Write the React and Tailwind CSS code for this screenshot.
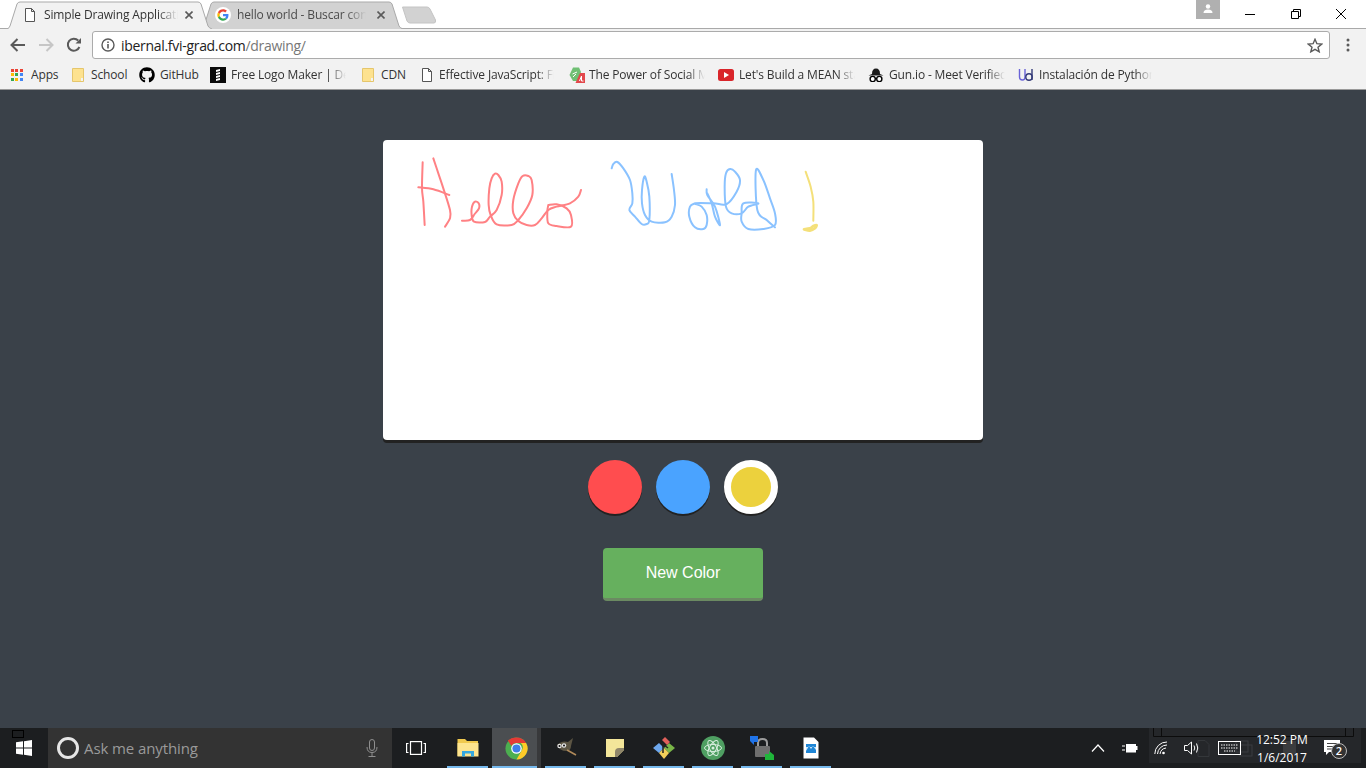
import { FaGithub } from 'react-icons/fa';

const UI_FONT = "font-['Open_Sans','Noto_Sans',sans-serif]";

const BOOKMARKS = [
  { label: 'Apps', icon: <AppsIcon />, width: 'w-[61px]', text: 'w-[30px] ml-[6px]' },
  { label: 'School', icon: <FolderIcon />, width: 'w-[69px]', text: 'w-[40px] ml-[5px]' },
  { label: 'GitHub', icon: <FaGithub className="w-4 h-4 text-black" />, width: 'w-[71px]', text: 'w-[42px] ml-[5px]' },
  { label: 'Free Logo Maker | Design', icon: <LogoMakerIcon />, width: 'w-[150px]', text: 'w-[115px] ml-[5px]', fade: true },
  { label: 'CDN', icon: <FolderIcon />, width: 'w-[59px]', text: 'w-[30px] ml-[5px]' },
  { label: 'Effective JavaScript: Free', icon: <PageIcon />, width: 'w-[150px]', text: 'w-[115px] ml-[4px]', fade: true },
  { label: 'The Power of Social Media', icon: <PowerIcon />, width: 'w-[149px]', text: 'w-[116px] ml-[4px]', fade: true },
  { label: "Let's Build a MEAN stack", icon: <YoutubeIcon />, width: 'w-[150px]', text: 'w-[116px] ml-[5px]', fade: true },
  { label: 'Gun.io - Meet Verified', icon: <GunIcon />, width: 'w-[150px]', text: 'w-[116px] ml-[5px]', fade: true },
  { label: 'Instalación de Python', icon: <UdacityIcon />, width: 'w-[134px]', text: 'w-[114px] ml-[5px]', fade: true },
];

// catmull-rom through the sampled points, so the hand drawn strokes stay round
function smooth(points) {
  const p = points.trim().split(/\s+/).map((s) => s.split(',').map(Number));
  let d = `M${p[0][0]} ${p[0][1]}`;
  for (let i = 0; i < p.length - 1; i++) {
    const a = p[i - 1] || p[i];
    const b = p[i];
    const c = p[i + 1];
    const e = p[i + 2] || c;
    d += ` C${b[0] + (c[0] - a[0]) / 6} ${b[1] + (c[1] - a[1]) / 6} ${c[0] - (e[0] - b[0]) / 6} ${c[1] - (e[1] - b[1]) / 6} ${c[0]} ${c[1]}`;
  }
  return d;
}

export default function App() {
  return (
    <div className={`w-[1366px] h-[768px] overflow-hidden flex flex-col bg-[#3a4149] ${UI_FONT}`}>
      <TabStrip />
      <Toolbar />
      <BookmarksBar />
      <main className="flex-1 flex flex-col items-center font-['Liberation_Sans',sans-serif]">
        {/* Drawing canvas */}
        <div className="mt-[50px] w-[600px] h-[300px] bg-white rounded shadow-[0_3px_0_#222222]">
          <Scribbles />
        </div>

        {/* Palette */}
        <div className="mt-5 flex gap-3.5">
          <div className="w-[54px] h-[54px] rounded-full bg-[#ff4d4f] shadow-[0_2px_0_#222222]" />
          <div className="w-[54px] h-[54px] rounded-full bg-[#4aa3ff] shadow-[0_2px_0_#222222]" />
          <div className="w-[54px] h-[54px] rounded-full bg-[#ecd13d] border-[7px] border-white shadow-[0_2px_0_#222222]" />
        </div>

        <button className="mt-[34px] w-40 h-[53px] rounded bg-[#66b05e] border-b-[3px] border-[#6b8a62] text-white text-base">
          New Color
        </button>
      </main>
      <Taskbar />
    </div>
  );
}

function TabStrip() {
  return (
    <div className="relative h-[29px] shrink-0 bg-white border-b border-[#a9a9a9] flex items-end">
      <Tab className="ml-[6px] w-[206px] pl-[16px] z-10" width={206} fill="#f2f2f2" icon={<PageIcon />} title="Simple Drawing Application" titleClass="w-[134px] ml-[6px] text-[#333333]" closeClass="ml-[7px]" />
      <Tab className="-ml-[12px] w-[203px] pl-[15px]" width={203} fill="#d2d2d2" icon={<GoogleIcon />} title="hello world - Buscar con Google" titleClass="w-[129px] ml-[6px] text-[#4b4b4b]" closeClass="ml-[11px]" />
      <svg width="36" height="18" viewBox="0 0 36 18" className="mb-[4px] -ml-[2px]">
        <path d="M1.5 1 H26 Q28 1 29 3 L34.5 14 Q35 17 33 17 H9 Q7 17 6 15 Z" fill="#d2d2d2" stroke="#c4c4c4" />
      </svg>
      <div className="ml-auto h-full self-start flex items-start pr-[2px]">
        <div className="w-6 h-[19px] bg-[#b0b0b0] flex justify-center pt-1 mr-[8px]">
          <svg width="10" height="10" viewBox="0 0 10 10">
            <circle cx="5" cy="2.5" r="2.2" fill="white" />
            <path d="M0.5 9 Q0.5 5.5 5 5.5 Q9.5 5.5 9.5 9 Z" fill="white" />
          </svg>
        </div>
        <WindowButton>
          <path d="M0 5.5 H10" stroke="black" />
        </WindowButton>
        <WindowButton>
          <path d="M0.5 2.5 H7.5 V9.5 H0.5 Z M2.5 2.5 V0.5 H9.5 V7.5 H7.5" stroke="black" fill="none" />
        </WindowButton>
        <WindowButton>
          <path d="M0 0 L10 10 M10 0 L0 10" stroke="black" />
        </WindowButton>
      </div>
    </div>
  );
}

function WindowButton({ children }) {
  return (
    <div className="w-[45.5px] h-[28px] flex items-center justify-center">
      <svg width="10" height="10" viewBox="0 0 10 10">{children}</svg>
    </div>
  );
}

function Tab({ className, width, fill, icon, title, titleClass, closeClass }) {
  return (
    <div className={`relative h-[28px] -mb-px flex items-center ${className}`}>
      <svg className="absolute inset-0" width={width} height="28" viewBox={`0 0 ${width} 28`}>
        <path d={`M0 28 Q3 28 4 25 L11 3 Q12 1 14 1 H${width - 14} Q${width - 12} 1 ${width - 11} 3 L${width - 4} 25 Q${width - 3} 27 ${width} 28`} fill={fill} stroke="#a9a9a9" />
      </svg>
      <span className="relative w-4 h-4 flex items-center justify-center">{icon}</span>
      <span className={`relative text-xs tracking-[-0.15px] whitespace-nowrap overflow-hidden ${titleClass} [mask-image:linear-gradient(to_right,black_85%,transparent)]`}>
        {title}
      </span>
      <svg className={`relative ${closeClass}`} width="8" height="8" viewBox="0 0 8 8">
        <path d="M0.5 0.5 L7.5 7.5 M7.5 0.5 L0.5 7.5" stroke="#5a5a5a" strokeWidth="1.6" />
      </svg>
    </div>
  );
}

function Toolbar() {
  return (
    <div className="h-[32px] shrink-0 bg-[#f2f2f2] flex items-center">
      <svg className="ml-[10px]" width="16" height="14" viewBox="0 0 16 14" fill="none" stroke="#5a5a5a" strokeWidth="2">
        <path d="M15 7 H2 M7.5 1 L1.5 7 L7.5 13" />
      </svg>
      <svg className="ml-[12px]" width="16" height="14" viewBox="0 0 16 14" fill="none" stroke="#c6c6c6" strokeWidth="2">
        <path d="M1 7 H14 M8.5 1 L14.5 7 L8.5 13" />
      </svg>
      <svg className="ml-[12px]" width="16" height="16" viewBox="0 0 16 16" fill="none">
        <path d="M13.4 10 A6 6 0 1 1 12.2 3.5" stroke="#5a5a5a" strokeWidth="2" />
        <path d="M9.5 6.5 H15 V1 Z" fill="#5a5a5a" />
      </svg>
      <div className="ml-[10px] w-[1238px] h-[28px] bg-white border border-[#ababab] rounded-[3px] flex items-center">
        <svg className="ml-[8px]" width="14" height="14" viewBox="0 0 14 14" fill="none">
          <circle cx="7" cy="7" r="6" stroke="#5a5a5a" strokeWidth="1.4" />
          <path d="M7 6 V10.5 M7 3.5 V5" stroke="#5a5a5a" strokeWidth="1.6" />
        </svg>
        <span className="ml-[6px] text-[14px] tracking-[-0.3px] text-[#222222]">
          ibernal.fvi-grad.com<span className="text-[#777777]">/drawing/</span>
        </span>
        <svg className="ml-auto mr-[6px]" width="16" height="15" viewBox="0 0 16 15" fill="none">
          <path d="M8 1.3 L9.9 5.7 L14.7 6.1 L11 9.2 L12.2 13.8 L8 11.4 L3.8 13.8 L5 9.2 L1.3 6.1 L6.1 5.7 Z" stroke="#5a5a5a" strokeWidth="1.4" />
        </svg>
      </div>
      <svg className="ml-[16px]" width="4" height="14" viewBox="0 0 4 14" fill="#5a5a5a">
        <circle cx="2" cy="2" r="1.5" />
        <circle cx="2" cy="7" r="1.5" />
        <circle cx="2" cy="12" r="1.5" />
      </svg>
    </div>
  );
}

function BookmarksBar() {
  return (
    <div className="h-[29px] shrink-0 bg-[#f2f2f2] border-b border-[#9a9a9a] flex items-center pl-[9px]">
      {BOOKMARKS.map((b) => (
        <div key={b.label} className={`${b.width} flex items-center`}>
          <span className="w-4 h-4 flex items-center justify-center shrink-0">{b.icon}</span>
          <span className={`${b.text} text-xs tracking-[-0.15px] text-[#333333] whitespace-nowrap overflow-hidden ${b.fade ? '[mask-image:linear-gradient(to_right,black_85%,transparent)]' : ''}`}>
            {b.label}
          </span>
        </div>
      ))}
    </div>
  );
}

function Scribbles() {
  const stroke = { fill: 'none', strokeWidth: 6, strokeLinejoin: 'round', strokeLinecap: 'round' };
  return (
    <svg width="600" height="300" viewBox="383 140 600 300">
      <g transform="translate(400 145) scale(0.3333)" stroke="#ff8184" {...stroke}>
        <path d={smooth('68,52 66,130 70,170 74,240')} />
        <path d={smooth('100,40 115,85 130,130 150,195 150,220 135,245')} />
        <path d={smooth('55,127 100,133 148,150')} />
        <path d={smooth('186,227 210,225 224,207 237,190 236,175 225,170 216,185 215,210 222,230 255,231 270,215 290,195 305,150 305,110 295,90 285,86 275,100 268,130 266,180 272,210 290,238 335,240 355,225 380,190 397,150 395,105 385,93 368,93 355,115 340,165 340,205 355,228 380,240 405,240 425,220 445,195 470,185 510,175 535,155 543,135')} />
        <path d={smooth('445,180 470,178 500,190 513,210 513,245 470,243 445,235 442,200 445,180')} />
      </g>
      <g transform="translate(600 150) scale(0.3333)" stroke="#8ac2ff" {...stroke}>
        <path d={smooth('35,55 40,42 52,36 70,55 90,90 97,130 97,160 88,180 105,200 125,222 140,222 148,210 148,140 140,95 133,80 126,120 126,160 135,195 155,215 195,217 215,200 225,165 222,120 215,72')} />
        <path d={smooth('285,160 270,170 268,200 285,232 310,237 320,225 320,195 305,170 285,160 340,160 380,162 410,125 420,90 405,65 390,57 378,70 374,110 378,170 395,190 425,190 445,170 475,160 430,160 425,190 425,215 445,237 490,237 525,225 525,190 510,145 490,90 468,60 472,180 500,210 525,232')} />
        <path d={smooth('320,118 322,135 345,170 360,225 345,200 335,160 322,130')} />
      </g>
      <g transform="translate(600 150) scale(0.3333)" stroke="#f4e07a" {...stroke}>
        <path d={smooth('617,65 632,110 640,155 640,212')} />
        <path d={smooth('612,238 630,242 645,235 650,225 640,228 630,235 612,238')} strokeWidth="8" />
      </g>
    </svg>
  );
}

function Taskbar() {
  const apps = [
    { icon: <ExplorerIcon />, key: 'explorer' },
    { icon: <ChromeIcon />, key: 'chrome', active: true },
    { icon: <GimpIcon />, key: 'gimp' },
    { icon: <NotesIcon />, key: 'notes' },
    { icon: <GitIcon />, key: 'git' },
    { icon: <AtomIcon />, key: 'atom' },
    { icon: <LockIcon />, key: 'lock' },
    { icon: <PhotoIcon />, key: 'photo' },
  ];
  return (
    <div className="relative h-10 shrink-0 bg-[#1c1e20] flex items-stretch text-white">
      {/* window thumbnail showing through the taskbar */}
      <div className="absolute left-[1149px] top-0 w-[212px] h-[35px] bg-[#25272a]" />
      <svg className="absolute left-[1149px] top-0" width="212" height="35" viewBox="0 0 212 35" fill="none">
        <path d="M4.5 0 V8.5 H204.5 V0 M12.5 0 V8.5 M196.5 0 V8.5" stroke="#0c0c0c" />
        <path d="M49 12.5 H56 L60 16.5 V28.5 H49 Z" stroke="#34373a" />
        <rect x="87" y="13" width="12" height="11" stroke="#3a3d40" />
        <rect x="91" y="17" width="12" height="11" stroke="#3a3d40" />
        <rect x="134" y="13" width="13" height="13" fill="#3a3c3e" />
      </svg>
      <div className="absolute left-3 top-0.5 w-3 h-2 border border-black" />

      <div className="w-12 flex items-center justify-center">
        <svg width="16" height="16" viewBox="0 0 16 16" fill="white">
          <path d="M0 2.3 L7 1.3 V7.5 H0 Z M8 1.2 L16 0 V7.5 H8 Z M0 8.5 H7 V14.7 L0 13.7 Z M8 8.5 H16 V16 L8 14.8 Z" />
        </svg>
      </div>
      <div className="w-[344px] bg-[#333333] flex items-center pl-[9px]">
        <div className="w-[22px] h-[22px] rounded-full border-[3px] border-[#e6e6e6]" />
        <span className="ml-[5px] text-[15px] tracking-[-0.1px] text-[#9a9a9a]">Ask me anything</span>
        <svg className="ml-auto mr-[14px]" width="12" height="18" viewBox="0 0 12 18" fill="none" stroke="#8f8f8f">
          <rect x="3.5" y="0.5" width="5" height="11" rx="2.5" />
          <path d="M1 8 Q1 13.5 6 13.5 Q11 13.5 11 8 M6 13.5 V17 M2.5 17.5 H9.5" />
        </svg>
      </div>
      <div className="w-[49px] flex items-center justify-center -translate-x-px">
        <svg width="20" height="14" viewBox="0 0 20 14" fill="none" stroke="white" strokeWidth="1.2">
          <rect x="4.5" y="0.6" width="11" height="12.8" />
          <path d="M2.5 2.5 H0.6 V11.5 H2.5 M17.5 2.5 H19.4 V11.5 H17.5" />
        </svg>
      </div>
      <div className="flex pl-[2px]">
        {apps.map((a) => (
          <div key={a.key} className={`relative w-[49px] flex items-center justify-center ${a.active ? 'bg-[#4b4e51] border-r-[4px] border-[#38393b] pl-[3px]' : ''}`}>
            {a.icon}
            <div className={`absolute bottom-0 h-0.5 bg-[#76b9ed] ${a.active ? 'inset-x-0' : 'inset-x-[4px]'}`} />
          </div>
        ))}
      </div>

      <div className="relative ml-auto flex items-center pr-[22px]">
        <svg width="14" height="8" viewBox="0 0 14 8" fill="none" stroke="white" strokeWidth="1.2">
          <path d="M1 7.5 L7 1 L13 7.5" />
        </svg>
        <svg className="ml-[17px]" width="16" height="10" viewBox="0 0 16 10" fill="white">
          <path d="M4 1 H14 V3 H15.5 V7 H14 V9.5 H4 Z" />
          <path d="M0 3 H3 M0 7 H3" stroke="white" />
        </svg>
        <svg className="ml-[16px]" width="14" height="14" viewBox="0 0 14 14" fill="none" stroke="white">
          <path d="M0.8 13 A12 12 0 0 1 13 1 M3.5 13 A9.5 9.5 0 0 1 13 4 M6 13 A7 7 0 0 1 12 7" />
          <circle cx="9.5" cy="12" r="1.3" fill="white" stroke="none" />
        </svg>
        <svg className="ml-[16px]" width="16" height="14" viewBox="0 0 16 14" fill="none" stroke="white">
          <path d="M0.5 4.5 H3.5 L7.5 1 V13 L3.5 9.5 H0.5 Z M10 4.5 Q11.5 7 10 9.5 M12.5 2.5 Q15 7 12.5 11.5" />
        </svg>
        <svg className="ml-[18px]" width="23" height="14" viewBox="0 0 23 14" fill="none" stroke="white">
          <rect x="0.5" y="0.5" width="22" height="13" />
          <path d="M3 4 H20 M3 7 H20 M6 10 H17" strokeDasharray="1.5 1" />
        </svg>
        <div className="ml-[10px] w-[62px] mt-0.5 flex flex-col items-center text-xs leading-[18px]">
          <span>12:52 PM</span>
          <span>1/6/2017</span>
        </div>
        <div className="relative ml-[11px] w-[20px] h-[16px]">
          <svg width="16" height="15" viewBox="0 0 16 15" fill="white">
            <path d="M0 0 H16 V12 H5 L2 15 V12 H0 Z" />
            <path d="M3 3.5 H13 M3 6.5 H13 M3 9 H10" stroke="#444444" />
          </svg>
          <div className="absolute left-[7px] top-[3px] w-[16px] h-[16px] rounded-full bg-[#333333] border border-[#bbbbbb] text-[11px] font-semibold flex items-center justify-center">
            2
          </div>
        </div>
      </div>
    </div>
  );
}

function PageIcon() {
  return (
    <svg width="12" height="14" viewBox="0 0 12 14" fill="white" stroke="#555555">
      <path d="M1.5 0.5 H7.5 L10.5 3.5 V13.5 H1.5 Z M7.5 0.5 V3.5 H10.5" />
    </svg>
  );
}

function FolderIcon() {
  return (
    <svg width="12" height="14" viewBox="0 0 12 14">
      <path d="M0.5 0.5 H11.5 V13.5 H0.5 Z" fill="#fde28f" stroke="#e5c66c" />
      <path d="M9 10 H11 V13 H9 Z" fill="#f3f3f3" />
    </svg>
  );
}

function AppsIcon() {
  const colors = ['#ea4335', '#ea4335', '#ea4335', '#fbbc05', '#34a853', '#4285f4', '#34a853', '#fbbc05', '#4285f4'];
  return (
    <div className="grid grid-cols-3 gap-px w-3 h-3">
      {colors.map((c, i) => (
        <svg key={i} width="3" height="3"><rect width="3" height="3" fill={c} /></svg>
      ))}
    </div>
  );
}

function LogoMakerIcon() {
  return (
    <svg width="16" height="16" viewBox="0 0 16 16">
      <rect width="16" height="16" fill="#0b0b0b" />
      <path d="M6 3 L10 2 V4 L6 5 Z M6 6 L10 5 V7 L6 8 Z M6 9 L10 8 V10 L6 11 Z M6 12 L10 11 V13 L6 14 Z" fill="white" />
    </svg>
  );
}

function PowerIcon() {
  return (
    <svg width="16" height="16" viewBox="0 0 16 16">
      <path d="M4 0.5 H10 L12 5 L9 14 H4 L0.5 8 Z" fill="#6fbf73" />
      <path d="M3.5 7 L8 5 M4 10 L7 7" stroke="white" />
      <path d="M6.5 16 L11 6 H16 V16 Z" fill="#e2484b" />
      <path d="M10.5 14 L12.5 9 V14 H14.5" stroke="white" fill="none" />
    </svg>
  );
}

function YoutubeIcon() {
  return (
    <svg width="16" height="12" viewBox="0 0 16 12">
      <rect width="16" height="12" rx="2.5" fill="#d9252a" />
      <path d="M6 3 L11 6 L6 9 Z" fill="white" />
    </svg>
  );
}

function GunIcon() {
  return (
    <svg width="16" height="14" viewBox="0 0 16 14">
      <path d="M4 6 Q4 0.5 8 0.5 Q12 0.5 12 6 L15.5 7.5 H0.5 Z" fill="#1a1a1a" />
      <circle cx="4.7" cy="11" r="2.6" fill="white" stroke="black" strokeWidth="1.4" />
      <circle cx="11.3" cy="11" r="2.6" fill="white" stroke="black" strokeWidth="1.4" />
      <path d="M7 10.5 H9" stroke="black" />
    </svg>
  );
}

function UdacityIcon() {
  return (
    <svg width="16" height="16" viewBox="0 0 16 16" fill="none">
      <path d="M1.5 2 V10 Q1.5 13 4.5 13 Q7 13 7 10 V2" stroke="#6a63d8" strokeWidth="1.4" />
      <circle cx="11" cy="10" r="3.2" stroke="#333a78" strokeWidth="1.4" />
      <path d="M14 2 V13" stroke="#333a78" strokeWidth="1.4" />
    </svg>
  );
}

function GoogleIcon() {
  return (
    <svg width="16" height="16" viewBox="0 0 48 48">
      <circle cx="24" cy="24" r="24" fill="white" />
      <g transform="translate(7 7) scale(0.71)">
        <path fill="#EA4335" d="M24 9.5c3.5 0 6.7 1.2 9.2 3.6l6.9-6.9C35.9 2.4 30.5 0 24 0 14.6 0 6.5 5.4 2.6 13.2l8 6.2C12.4 13.7 17.7 9.5 24 9.5z" />
        <path fill="#4285F4" d="M47 24.5c0-1.6-.1-3.1-.4-4.5H24v9h12.9c-.6 3-2.2 5.5-4.7 7.2l7.7 6c4.5-4.2 7.1-10.3 7.1-17.7z" />
        <path fill="#FBBC05" d="M10.6 28.6c-.5-1.4-.8-3-.8-4.6s.3-3.2.8-4.6l-8-6.2C.9 16.5 0 20.1 0 24s.9 7.5 2.6 10.8l8-6.2z" />
        <path fill="#34A853" d="M24 48c6.5 0 11.9-2.1 15.9-5.8l-7.7-6c-2.2 1.4-4.9 2.3-8.2 2.3-6.3 0-11.6-4.2-13.4-9.9l-8 6.2C6.5 42.6 14.6 48 24 48z" />
      </g>
    </svg>
  );
}

function ChromeIcon() {
  return (
    <svg width="23" height="23" viewBox="0 0 48 48">
      <circle cx="24" cy="24" r="23" fill="#4caf50" />
      <path d="M24 1 A23 23 0 0 1 44 12.5 H24 A11.5 11.5 0 0 0 13.5 19 L6 7.5 A23 23 0 0 1 24 1 Z" fill="#e53935" />
      <path d="M44 12.5 A23 23 0 0 1 24 47 L34 29.5 A11.5 11.5 0 0 0 33 12.5 Z" fill="#ffca28" />
      <circle cx="24" cy="24" r="11" fill="white" />
      <circle cx="24" cy="24" r="8.5" fill="#3f7ee8" />
    </svg>
  );
}

function ExplorerIcon() {
  return (
    <svg width="22" height="20" viewBox="0 0 22 20">
      <path d="M0.5 1 H8 L10 3 H21 V18 H0.5 Z" fill="#f0c94f" />
      <path d="M0.5 5 H21.5 V18.5 H0.5 Z" fill="#fde48f" />
      <path d="M5 18.5 V13 H17 V18.5 H14 V15.5 H8 V18.5 Z" fill="#35a8e0" />
    </svg>
  );
}

function GimpIcon() {
  return (
    <svg width="24" height="22" viewBox="0 0 24 22">
      <path d="M3 8 Q8 3 14 5 L19 1 L17 9 Q17 14 12 14 Q6 14 3 8 Z" fill="#5c5543" />
      <circle cx="5.5" cy="9" r="2.2" fill="#e6e6e6" />
      <circle cx="10" cy="8.5" r="2.2" fill="#e6e6e6" />
      <circle cx="5.5" cy="9" r="1" fill="#111111" />
      <circle cx="10" cy="8.5" r="1" fill="#111111" />
      <path d="M13 13 L22 18" stroke="#b08a5a" strokeWidth="1.6" />
    </svg>
  );
}

function NotesIcon() {
  return (
    <svg width="18" height="18" viewBox="0 0 18 18">
      <path d="M0 0 H18 V11 L11 18 H0 Z" fill="#f3e69a" />
      <path d="M18 9 V11 L11 18 H9 V13 Q9 9 13 9 Z" fill="#8f866a" />
    </svg>
  );
}

function GitIcon() {
  return (
    <svg width="24" height="24" viewBox="0 0 24 24">
      <path d="M7 7 L12 12 L7 17 L1 12 Z" fill="#6ea8ee" />
      <path d="M12 12 L17 7 L23 12 L17 17 Z" fill="#7ab648" />
      <path d="M12 12 L17 17 L12 23 L7 17 Z" fill="#f3cf5a" />
      <path d="M10 4 L13 1 L18 6 L15 9 Z" fill="#e0605a" />
      <path d="M11 7 V17 M12 9 L16 12" stroke="#222222" strokeWidth="1.5" />
    </svg>
  );
}

function AtomIcon() {
  return (
    <svg width="24" height="24" viewBox="0 0 24 24" fill="none">
      <circle cx="12" cy="12" r="12" fill="#4f9f62" />
      <g stroke="#d9efe0" strokeWidth="1">
        <ellipse cx="12" cy="12" rx="8.5" ry="3.5" />
        <ellipse cx="12" cy="12" rx="8.5" ry="3.5" transform="rotate(60 12 12)" />
        <ellipse cx="12" cy="12" rx="8.5" ry="3.5" transform="rotate(120 12 12)" />
      </g>
      <circle cx="12" cy="12" r="1.5" fill="#d9efe0" />
    </svg>
  );
}

function LockIcon() {
  return (
    <svg width="24" height="24" viewBox="0 0 24 24" fill="none">
      <path d="M8 11 V7 Q8 3 12.5 3 Q17 3 17 7 V11" stroke="#9c9c9c" strokeWidth="2" />
      <rect x="5" y="10" width="15" height="11" rx="1" fill="#6f6f6f" />
      <path d="M0 0 H8 V6 H4 V9 L0 5 Z" fill="#1f73e8" />
      <path d="M24 24 H15 V18 H19 V15 L24 19 Z" fill="#1fb53a" />
    </svg>
  );
}

function PhotoIcon() {
  return (
    <svg width="16" height="22" viewBox="0 0 16 22">
      <path d="M0.5 0.5 H11 L15.5 5 V21.5 H0.5 Z" fill="white" />
      <rect x="3" y="7" width="10" height="9" fill="#1f86d6" />
      <path d="M3 14 L6 9 L8 12 L10 9 L13 13 V10 H3 Z" fill="#cfe8fa" />
    </svg>
  );
}
